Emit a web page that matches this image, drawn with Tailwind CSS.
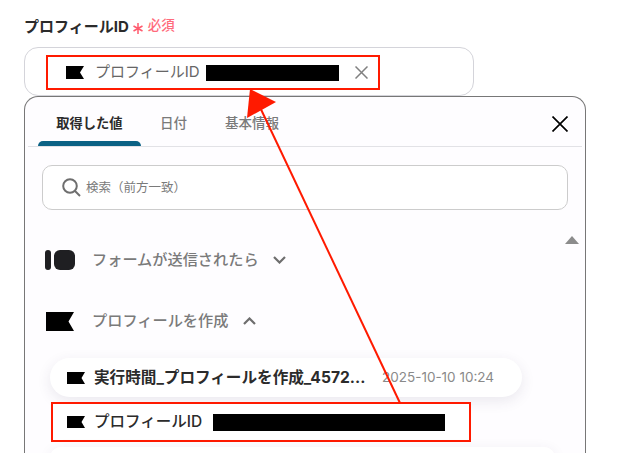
<!DOCTYPE html>
<html lang="ja">
<head>
    <meta charset="UTF-8">
    <title>プロフィールID</title>
    <script src="https://cdn.jsdelivr.net/npm/@tailwindcss/browser@4"></script>
</head>
<body class="relative w-[619px] h-[453px] overflow-hidden bg-white font-['Inter','Noto_Sans_CJK_JP',sans-serif] text-[#2b2b2b]">
    <!-- Field label -->
    <div class="flex items-center h-[20px] mt-[16px] ml-[24px]">
        <span class="text-[15px] font-bold leading-none">プロフィールID</span>
        <svg class="ml-[4px] mt-[4px]" width="10" height="11" viewBox="0 0 10 11" fill="none" stroke="#ff5a6e" stroke-width="1.5"><path d="M5 0V11M0.5 3L9.5 8M9.5 3L0.5 8"/></svg>
        <span class="ml-[5px] text-[13.5px] font-medium text-[#ff6b7c] leading-none">必須</span>
    </div>

    <!-- Selected value -->
    <div class="flex h-[49px] w-[450px] mt-[11px] ml-[24px] border border-[#d4d4da] rounded-[14px]">
        <div class="flex items-center self-start h-[35px] w-[334px] mt-[7px] ml-[21px] border-2 border-[#ff1a00]">
            <svg class="ml-[18px]" width="18" height="13" viewBox="0 0 18 13"><path d="M0 0H18L14 6.5L18 13H0Z" fill="#000"/></svg>
            <span class="ml-[11px] text-[15px] text-[#666]">プロフィールID</span>
            <span class="ml-[6px] w-[133px] h-[16px] bg-black"></span>
            <svg class="ml-[16px]" width="13" height="13" viewBox="0 0 13 13"><path d="M0.5 0.5L12.5 12.5M12.5 0.5L0.5 12.5" stroke="#808080" stroke-width="1.5"/></svg>
        </div>
    </div>

    <!-- Dropdown panel -->
    <div class="w-[562px] h-[357px] ml-[24px] border-x border-t border-[#777] rounded-t-[14px] bg-[#fefdff] overflow-hidden">
        <div class="relative flex h-[50px] mx-[3px] border-b border-[#e2e2e6]">
            <div class="relative w-[103px] ml-[10px] flex items-center justify-center pt-[5px] text-[13.25px] font-bold">
                取得した値
                <span class="absolute left-0 bottom-0 w-full h-[5px] rounded-t-[5px] bg-[#0b6285]"></span>
            </div>
            <div class="ml-[19px] flex items-center pt-[3px] text-[13.5px] font-medium text-[#7a7a7a]">日付</div>
            <div class="ml-[38px] flex items-center pt-[3px] text-[13.5px] font-medium text-[#7a7a7a]">基本情報</div>
            <svg class="absolute right-[14px] top-[19px]" width="16" height="16" viewBox="0 0 16 16"><path d="M0.5 0.5L15.5 15.5M15.5 0.5L0.5 15.5" stroke="#000" stroke-width="1.7"/></svg>
        </div>

        <div class="flex items-center h-[45px] w-[526px] mt-[18px] ml-[17px] border border-[#cccccc] rounded-[10px] bg-white">
            <svg class="ml-[19px]" width="19" height="19" viewBox="0 0 19 19" fill="none" stroke="#6e6e6e" stroke-width="2"><circle cx="8" cy="8" r="6.8"/><path d="M13 13L18 18"/></svg>
            <span class="ml-[5px] pt-[1px] text-[12.5px] text-[#7a7a7a]">検索（前方一致）</span>
        </div>

        <div class="relative pt-[39px]">
            <div class="absolute right-[6px] top-[26px] w-0 h-0 border-x-[7px] border-x-transparent border-b-[8px] border-b-[#8c8c8c]"></div>

            <div class="flex items-center h-[22px] ml-[20px]">
                <svg width="30" height="20" viewBox="0 0 30 20" fill="#1f1f22"><rect x="0" y="0" width="6" height="20" rx="3"/><rect x="9" y="0" width="21" height="20" rx="6"/></svg>
                <span class="ml-[17px] text-[15.2px] font-medium text-[#7a7a7a]">フォームが送信されたら</span>
                <svg class="ml-[14px]" width="13" height="8" viewBox="0 0 13 8" fill="none" stroke="#6e6e6e" stroke-width="2.2"><path d="M1 1L6.5 6.5L12 1"/></svg>
            </div>

            <div class="flex items-center h-[22px] mt-[39px] ml-[21px]">
                <svg width="28" height="19" viewBox="0 0 28 19"><path d="M0 0H28L22.5 9.5L28 19H0Z" fill="#000"/></svg>
                <span class="ml-[18px] text-[15.2px] font-medium text-[#7a7a7a]">プロフィールを作成</span>
                <svg class="ml-[15px]" width="13" height="8" viewBox="0 0 13 8" fill="none" stroke="#6e6e6e" stroke-width="2.2"><path d="M1 7L6.5 1.5L12 7"/></svg>
            </div>

            <div class="flex items-center h-[39px] w-[472px] mt-[26px] ml-[25px] rounded-[20px] bg-white shadow-[0_4px_14px_rgba(60,50,90,0.10)]">
                <svg class="ml-[17px]" width="18" height="12" viewBox="0 0 18 12"><path d="M0 0H18L14.5 6L18 12H0Z" fill="#000"/></svg>
                <span class="ml-[9px] w-[272px] whitespace-nowrap text-[15.6px] font-bold">実行時間_プロフィールを作成_4572...</span>
                <span class="ml-[16px] text-[13.5px] text-[#8a8a8a]">2025-10-10 10:24</span>
            </div>

            <div class="flex items-center h-[40px] w-[420px] mt-[5px] ml-[26px] border-2 border-[#ff1a00] bg-white">
                <svg class="ml-[14px]" width="18" height="12" viewBox="0 0 18 12"><path d="M0 0H18L14.5 6L18 12H0Z" fill="#000"/></svg>
                <span class="ml-[9px] text-[15.5px] font-medium">プロフィールID</span>
                <span class="ml-[11px] w-[232px] h-[17px] bg-black"></span>
            </div>

            <div class="h-[11px] w-[505px] mt-[5px] ml-[25px] rounded-t-[20px] bg-white shadow-[0_4px_14px_rgba(60,50,90,0.10)]"></div>
        </div>
    </div>

    <!-- Annotation arrow -->
    <svg class="absolute left-0 top-0 pointer-events-none" width="619" height="453" viewBox="0 0 619 453">
        <path d="M258 103L400 403" stroke="#ff1a00" stroke-width="2" fill="none"/>
        <path d="M250 89L276 102L247 118Z" fill="#ff1a00"/>
    </svg>
</body>
</html>
